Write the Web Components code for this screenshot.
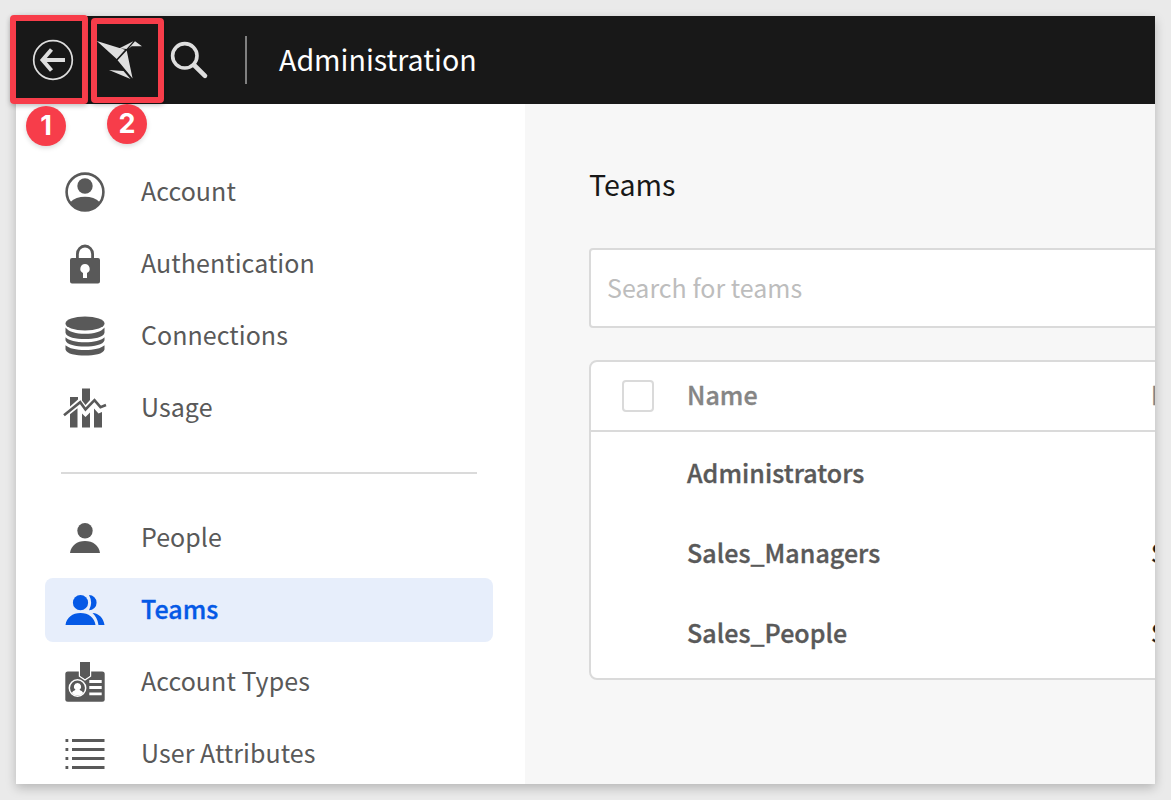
<!DOCTYPE html>
<html lang="en">
<head>
<meta charset="utf-8">
<title>Administration</title>
<style>
html,body{margin:0;height:100%;overflow:hidden;background:#eaeaea}
body{font-family:"Noto Sans CJK SC","Noto Sans",sans-serif;font-size:25px}
</style>
</head>
<body>
<admin-app></admin-app>
<script>
const ICONS={
account:'<circle cx="22" cy="22" r="18.4" fill="none" stroke="currentColor" stroke-width="2.6"/><circle cx="22" cy="16" r="7.7"/><path d="M7.2 32.2C11 28.4 16 26.7 22 26.7s11 1.700 14.800 5.500C33 38.200 28 41 22 41S11 38.200 7.200 32.200z"/>',
lock:'<path d="M14.400 17v-5a7.600 8 0 0 1 15.200 0v5" fill="none" stroke="currentColor" stroke-width="2.800"/><path fill-rule="evenodd" d="M9 16h26q2 0 2 2v21.500q0 2-2 2H9q-2 0-2-2V18q0-2 2-2zM22 22a4.800 4.800 0 0 0-2 9.100V36h4v-4.900A4.800 4.800 0 0 0 22 22z"/>',
database:'<ellipse cx="22" cy="9.500" rx="19.500" ry="6.900"/><path d="M2.500 13.500C6 18.200 13 19.700 22 19.700s16-1.500 19.500-6.200v5.200C40.500 23.500 31 25 22 25S3.500 23.500 2.500 18.700z"/><path d="M2.500 23.300C6 26.800 13 28.300 22 28.300s16-1.500 19.500-5v3C40.500 30.800 31 32.600 22 32.600S3.500 30.800 2.500 26.300z"/><path d="M2.500 31.300C6 34.500 13 36 22 36s16-1.500 19.500-4.700v4.200C40.500 40 31 41.500 22 41.500S3.500 40 2.500 35.500z"/>',
usage:'<path d="M7 11h8v2.500l-8 7zM19 2.500h8v11.500l-4.500 5L19 14.500zM7 28.200l7.500-6V41.500H7zM19 27.500l3.500 3.500 4.500-4.500v15h-8zM31 22.500l4.500 5 3.500-1.500v15.500h-8z"/><path d="M1 29.200 17.200 16.200 22.500 23.500 31.500 14.200 37.500 21.200 43 19" fill="none" stroke="currentColor" stroke-width="2.600"/>',
person:'<circle cx="22" cy="14.700" r="7.700"/><path d="M7 37c1-7.500 7-12 15-12s14 4.500 15 12z"/>',
people:'<circle cx="17.500" cy="14.700" r="7.600"/><path d="M2.500 37c1-7.500 7-12 15-12s14 4.500 15 12zM26 7.100a7.600 7.600 0 0 1 0 15.200q4.200-7.600 0-15.200zM29.500 25c6.500.5 11 5 12 12h-6q-1-7.500-6-12z"/>',
badge:'<rect x="2.300" y="11.500" width="39.400" height="30.200" rx="2.500"/><path d="M16.500 11v5.200l5.500 3.600 5.500-3.600V11" fill="none" stroke="#fff" stroke-width="1.400"/><path d="M17 2h10v13.700l-5 3.200-5-3.200z"/><circle cx="14.500" cy="28" r="8.200" fill="none" stroke="#fff" stroke-width="1.500"/><path fill="#fff" d="M14.500 23a3.700 3.700 0 0 1 2 6.800c1 1 3.500 1.300 3.500 3.500-3 3-8 3-11 0 0-2.200 2.500-2.500 3.500-3.500a3.700 3.700 0 0 1 2-6.800zM26.300 20h12.400v3H26.300zM26.300 26h12.400v3H26.300zM26.300 32.500h12.400v2.700H26.300z"/>',
list:'<path d="M2.500 7h2.800v3H2.500zM9 7h32.500v3H9zM2.500 16h2.800v3H2.500zM9 16h32.500v3H9zM2.500 25h2.800v3H2.500zM9 25h32.500v3H9zM2.500 34h2.800v3H2.500zM9 34h32.500v3H9z"/>'
};
const define=(name,html)=>customElements.define(name,class extends HTMLElement{
  constructor(){super();this.attachShadow({mode:'open'});}
  connectedCallback(){
    const t=document.createElement('template');
    t.innerHTML=typeof html==='function'?html(this):html;
    this.shadowRoot.replaceChildren(t.content.cloneNode(true));
  }
});

define('nav-item',el=>`<style>
:host{display:flex;align-items:center;height:64px;margin:0 32px 8px 29px;padding-left:18px;border-radius:8px;color:#595959;box-sizing:border-box;letter-spacing:.05px}
:host([active]){background:#e7eefb;color:#0559e6;font-weight:500;-webkit-text-stroke:.35px currentColor}
svg{width:44px;height:44px;flex:none;fill:currentColor;margin-right:34px}
span{white-space:nowrap;line-height:60px;padding-bottom:4px}
</style><svg viewBox="0 0 44 44">${ICONS[el.getAttribute('icon')]}</svg><span><slot></slot></span>`);

define('side-nav',`<style>
:host{display:block;width:509px;flex:none;background:#fff;padding-top:56px;box-sizing:border-box;overflow:hidden}
hr{border:0;height:2px;background:#dadada;margin:32px 48px 32px 45px}
</style><slot name="top"></slot><hr><slot name="bottom"></slot>`);

define('top-bar',`<style>
:host{display:flex;align-items:center;height:88px;background:#181818;color:#fff;box-sizing:border-box;flex:none}
svg{flex:none;display:block}
i{width:2px;height:48px;background:#808080;margin:0 32px 0 36px}
span{font-size:28.6px;line-height:86px;padding-bottom:2px}
</style>
<svg width="72" height="88" viewBox="16 16 72 88" fill="none" stroke="#dedede"><circle cx="53" cy="60" r="19.300" stroke-width="1.700"/><path d="M65 60H43M51.500 49.500 42.500 60l9 10.500" stroke-width="4"/></svg>
<svg width="75" height="88" viewBox="88 16 75 88" fill="#dedede"><path d="M96.800 41 125 49.800 116.700 59zM119.500 48.200 133.300 41.200 126.500 49zM135 41.200 142 46.300 131.800 46.300 128.700 48.500zM126.700 50.600 132.600 78.500 117.600 60.300zM109 70 123.500 71 130.500 79z"/></svg>
<svg width="46" height="88" viewBox="163 16 46 88" fill="none" stroke="#dedede"><circle cx="184.800" cy="55.800" r="12.200" stroke-width="3.600"/><path d="m194 65 11 10.800" stroke-width="4.600" stroke-linecap="round"/></svg>
<i></i><span><slot></slot></span>`);

define('search-field',`<style>
:host{display:block;height:80px;box-sizing:border-box;background:#fff;border:2px solid #dadada;border-radius:4px;padding-left:16px;line-height:74px;color:#bdbdbd}
</style><slot></slot>`);

define('team-row',`<style>
:host{display:grid;grid-template-columns:96px 464px 1fr;height:80px;line-height:76px;align-items:start;color:#595959;font-weight:500;white-space:nowrap;letter-spacing:.05px;-webkit-text-stroke:.35px currentColor}
:host([head]){height:68px;line-height:64px;border-bottom:2px solid #dadada;margin-bottom:2px;color:#858585}
b{display:none;width:32px;height:32px;box-sizing:border-box;border:2px solid #dadada;border-radius:4px;margin:18px 0 0 31px}
:host([head]) b{display:block}
.v{grid-column:3;color:#181818;font-weight:400}
:host([head]) .v{color:inherit;font-weight:500}
.n{grid-column:2}
</style><b></b><span class="n"><slot></slot></span><span class="v"><slot name="value"></slot></span>`);

define('team-table',`<style>
:host{display:block;height:320px;box-sizing:border-box;background:#fff;border:2px solid #dadada;border-radius:8px;margin-top:32px}
</style><slot></slot>`);

define('team-page',`<style>
:host{display:block;flex:1;min-width:0;background:#f7f7f7;padding-left:64px;overflow:hidden}
div{width:700px}
h1{margin:0;padding-top:52px;height:92px;line-height:56px;font-size:28.6px;font-weight:400;color:#181818}
</style><div><h1><slot name="title"></slot></h1><slot></slot></div>`);

define('call-out',el=>`<style>
:host{position:absolute;box-sizing:border-box;border:6px solid #f73d4a;border-radius:4px;box-shadow:0 2px 5px rgba(0,0,0,.25)}
:host([n="1"]){left:10px;top:15px;width:78px;height:89px}
:host([n="2"]){left:90.500px;top:18px;width:73px;height:85px}
span{position:absolute;left:10px;top:85px;width:40px;height:40px;border-radius:50%;background:#f73d4a;color:#fff;font:700 27px/39px Inter,sans-serif;text-align:center;box-shadow:0 2px 5px rgba(0,0,0,.15)}
:host([n="2"]) span{left:10.500px;top:80px}
</style><span>${el.getAttribute('n')}</span>`);

define('admin-app',`<style>
:host{display:block;padding:16px;width:1171px;height:800px;box-sizing:border-box}
main{display:flex;flex-direction:column;width:1139px;height:768px;overflow:hidden;background:#fff}
.shadow{width:1139px;height:768px;box-shadow:0 4px 10px rgba(0,0,0,.22)}
section{display:flex;flex:1;min-height:0}
</style>
<div class="shadow"><main><top-bar>Administration</top-bar><section>
<side-nav>
<nav-item slot="top" icon="account">Account</nav-item>
<nav-item slot="top" icon="lock">Authentication</nav-item>
<nav-item slot="top" icon="database">Connections</nav-item>
<nav-item slot="top" icon="usage">Usage</nav-item>
<nav-item slot="bottom" icon="person">People</nav-item>
<nav-item slot="bottom" icon="people" active>Teams</nav-item>
<nav-item slot="bottom" icon="badge">Account Types</nav-item>
<nav-item slot="bottom" icon="list">User Attributes</nav-item>
</side-nav>
<team-page><span slot="title">Teams</span>
<search-field>Search for teams</search-field>
<team-table>
<team-row head>Name<span slot="value">D</span></team-row>
<team-row>Administrators</team-row>
<team-row>Sales_Managers<span slot="value">S</span></team-row>
<team-row>Sales_People<span slot="value">S</span></team-row>
</team-table></team-page>
</section></main></div>
<call-out n="1"></call-out><call-out n="2"></call-out>`);
</script>
</body>
</html>
